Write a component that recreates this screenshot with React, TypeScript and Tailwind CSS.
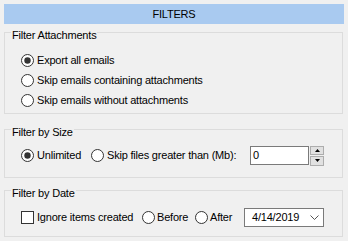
function Radio({ checked = false }: { checked?: boolean }) {
  return (
    <svg width="13" height="13" viewBox="0 0 13 13" className="shrink-0">
      <circle cx="6.5" cy="6.5" r="6" fill="#fff" stroke="#333" strokeWidth="1" />
      {checked && <circle cx="6.5" cy="6.5" r="3.2" fill="#333" />}
    </svg>
  );
}

function Checkbox() {
  return <span className="block h-[13px] w-[13px] shrink-0 border border-[#333] bg-white" />;
}

function Group({ title, className, children }: { title: string; className: string; children: React.ReactNode }) {
  return (
    <fieldset className={`mr-[1px] border border-[#dcdcdc] pl-[16px] ${className}`}>
      <legend className="-ml-[10px] px-[1px] pt-[5px] leading-[12px]">{title}</legend>
      {children}
    </fieldset>
  );
}

export default function App() {
  return (
    <div className="h-[241px] w-[348px] bg-[#f0f0f0] px-[4px] pt-[4px] font-['Liberation_Sans',Arial,sans-serif] text-[11px] leading-[13px] tracking-[-0.2px] text-black">
      <div className="flex h-[20px] items-center justify-center bg-[#a9caf0]">FILTERS</div>

      <Group title="Filter Attachments" className="pt-[10px] pb-[3px]">
        <div className="flex flex-col gap-[1px]">
          {[
            { label: 'Export all emails', checked: true },
            { label: 'Skip emails containing attachments', checked: false },
            { label: 'Skip emails without attachments', checked: false },
          ].map((o) => (
            <label key={o.label} className="flex h-[19px] items-center gap-[3px]">
              <Radio checked={o.checked} />
              <span>{o.label}</span>
            </label>
          ))}
        </div>
      </Group>

      <Group title="Filter by Size" className="mt-[7px] pt-[8px] pb-[12px]">
        <div className="flex h-[19px] items-center">
          <label className="flex w-[70px] items-center gap-[3px]">
            <Radio checked />
            <span>Unlimited</span>
          </label>
          <label className="flex w-[159px] items-center gap-[3px]">
            <Radio />
            <span>Skip files greater than (Mb):</span>
          </label>
          <div className="flex h-[19px] w-[59px] items-center border border-[#7a7a7a] bg-white pl-[2px]">0</div>
          <div className="ml-[1px] flex h-[20px] w-[14px] flex-col gap-[1px]">
            <div className="flex flex-1 items-center justify-center border border-[#adadad] bg-[#e1e1e1]">
              <svg width="5" height="3" viewBox="0 0 5 3"><path d="M0 3 L2.5 0 L5 3 Z" fill="#000" /></svg>
            </div>
            <div className="flex flex-1 items-center justify-center border border-[#adadad] bg-[#e1e1e1]">
              <svg width="5" height="3" viewBox="0 0 5 3"><path d="M0 0 L2.5 3 L5 0 Z" fill="#000" /></svg>
            </div>
          </div>
        </div>
      </Group>

      <Group title="Filter by Date" className="mt-[4px] pt-[9px] pb-[9px]">
        <div className="flex h-[19px] items-center">
          <label className="flex w-[121px] items-center gap-[3px]">
            <Checkbox />
            <span>Ignore items created</span>
          </label>
          <label className="flex w-[53px] items-center gap-[2px]">
            <Radio />
            <span>Before</span>
          </label>
          <label className="flex w-[49px] items-center gap-[2px]">
            <Radio />
            <span>After</span>
          </label>
          <div className="flex h-[19px] w-[80px] items-center justify-between border border-[#7a7a7a] bg-white pl-[7px] pr-[4px]">
            <span>4/14/2019</span>
            <svg width="9" height="5" viewBox="0 0 9 5">
              <path d="M0.5 0.5 L4.5 4.5 L8.5 0.5" fill="none" stroke="#555" strokeWidth="1" />
            </svg>
          </div>
        </div>
      </Group>
    </div>
  );
}
